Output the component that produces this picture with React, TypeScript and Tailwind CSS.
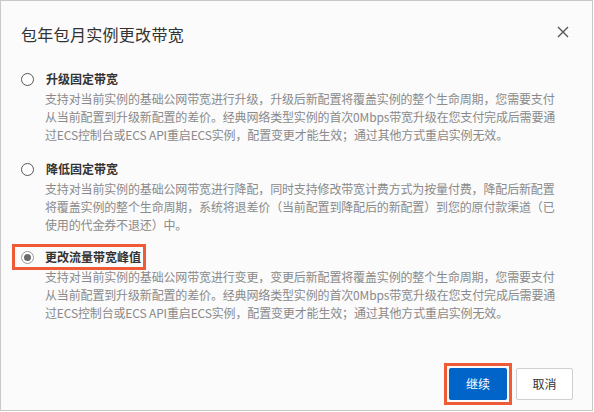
import React from "react";

const FONT = { fontFamily: '"Noto Sans CJK SC", "Liberation Sans", sans-serif' };

function Radio({ checked }: { checked?: boolean }) {
  if (checked) {
    return (
      <span className="flex h-[13px] w-[13px] shrink-0 items-center justify-center rounded-full border border-[#9a9a9a] bg-white">
        <span className="h-[7px] w-[7px] rounded-full bg-[#6a6a6a]" />
      </span>
    );
  }
  return <span className="block h-[13px] w-[13px] shrink-0 rounded-full border border-[#555] bg-white" />;
}

function Desc({ lines }: { lines: string[] }) {
  return (
    <div className="ml-6 mt-[1px] text-[12px] leading-[18px] tracking-[-0.15px] text-[#8a8a8a]">
      {lines.map((l, i) => (
        <div key={i} className="whitespace-nowrap">
          {l}
        </div>
      ))}
    </div>
  );
}

export default function App() {
  return (
    <div className="h-[412px] w-[594px] bg-white" style={FONT}>
      <div className="flex h-[411px] w-[593px] flex-col border border-[#c9c9c9] bg-[#fbfbfb]">
        <div className="flex items-center justify-between pl-5 pr-[23px] pt-[21px]">
          <div className="text-[16px] leading-6 tracking-[0.3px] text-[#333]">包年包月实例更改带宽</div>
          <svg width="12" height="12" viewBox="0 0 12 12" className="mt-[-4px]">
            <path d="M1 1 L11 11 M11 1 L1 11" stroke="#555" strokeWidth="1.4" />
          </svg>
        </div>

        <div className="flex flex-col pl-5">
          <div className="mt-[23px]">
            <div className="flex h-5 items-center gap-3">
              <Radio />
              <span className="text-[12px] font-bold text-[#333]">升级固定带宽</span>
            </div>
            <Desc
              lines={[
                "支持对当前实例的基础公网带宽进行升级，升级后新配置将覆盖实例的整个生命周期，您需要支付",
                "从当前配置到升级新配置的差价。经典网络类型实例的首次0Mbps带宽升级在您支付完成后需要通",
                "过ECS控制台或ECS API重启ECS实例，配置变更才能生效；通过其他方式重启实例无效。",
              ]}
            />
          </div>

          <div className="mt-[15px]">
            <div className="flex h-5 items-center gap-3">
              <Radio />
              <span className="text-[12px] font-bold text-[#333]">降低固定带宽</span>
            </div>
            <Desc
              lines={[
                "支持对当前实例的基础公网带宽进行降配，同时支持修改带宽计费方式为按量付费，降配后新配置",
                "将覆盖实例的整个生命周期，系统将退差价（当前配置到降配后的新配置）到您的原付款渠道（已",
                "使用的代金券不退还）中。",
              ]}
            />
          </div>

          <div className="mt-[13px]">
            <div className="-my-[3px] -ml-[9px] flex h-[26px] w-fit items-center gap-[11px] border-[3px] border-[#ef5a37] pl-[6px] pr-[2px]">
              <Radio checked />
              <span className="text-[12px] font-bold text-[#333]">更改流量带宽峰值</span>
            </div>
            <Desc
              lines={[
                "支持对当前实例的基础公网带宽进行变更，变更后新配置将覆盖实例的整个生命周期，您需要支付",
                "从当前配置到升级新配置的差价。经典网络类型实例的首次0Mbps带宽升级在您支付完成后需要通",
                "过ECS控制台或ECS API重启ECS实例，配置变更才能生效；通过其他方式重启实例无效。",
              ]}
            />
          </div>
        </div>

        <div className="mt-auto flex items-center justify-end pb-[5px] pr-[19px]">
          <div className="border-[3px] border-[#ef5a37] p-[2px]">
            <button className="flex h-8 w-[58px] items-center justify-center rounded-[2px] bg-[#0064c8] text-[12px] text-white">
              继续
            </button>
          </div>
          <button className="ml-1 flex h-8 w-[57px] items-center justify-center rounded-[2px] border border-[#cfcfcf] bg-white text-[12px] text-[#333]">
            取消
          </button>
        </div>
      </div>
    </div>
  );
}
